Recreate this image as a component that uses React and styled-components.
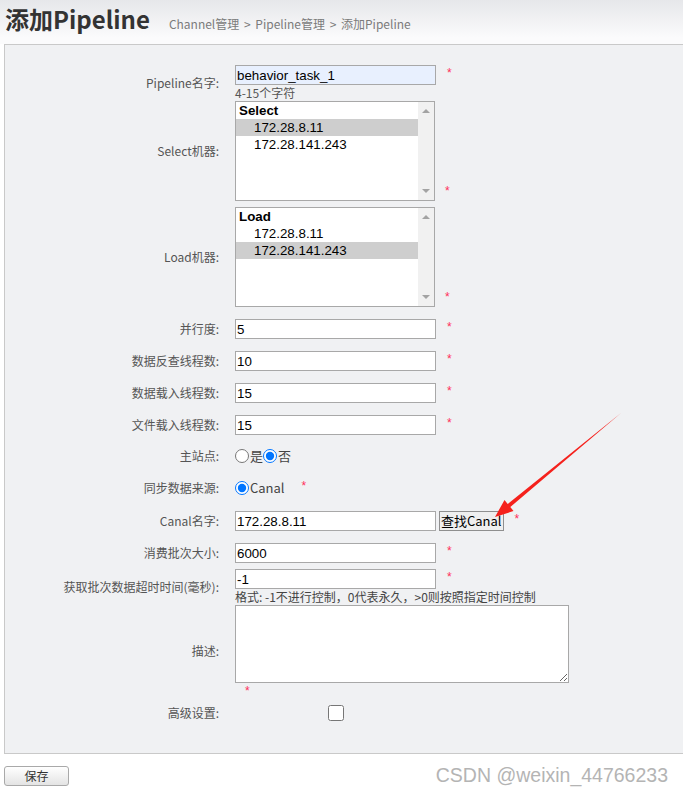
import React from 'react';
import styled, { createGlobalStyle } from 'styled-components';

const GlobalStyle = createGlobalStyle`
  body {
    margin: 0;
    background: #fff;
    font-family: "Liberation Sans", "Noto Sans CJK SC", sans-serif;
    overflow: hidden;
  }
`;

const Page = styled.div`
  position: relative;
  width: 683px;
  height: 793px;
`;

const Header = styled.div`
  height: 44px;
  display: flex;
  align-items: baseline;
  background: linear-gradient(#e6e7ea, #fbfbfc 38px);
`;

const Title = styled.h1`
  margin: 0 0 0 5px;
  font-family: "Noto Sans CJK SC", sans-serif;
  font-size: 24px;
  font-weight: 700;
  line-height: 38px;
  color: #333;
`;

const Crumbs = styled.div`
  margin-left: 19px;
  font-family: "Noto Sans CJK SC", sans-serif;
  font-size: 12px;
  color: #7b7b7b;
  word-spacing: 2px;
`;

const Panel = styled.div`
  margin: 0 -4px 0 4px;
  box-sizing: border-box;
  height: 710px;
  border: 1px solid #c9c9c9;
  background: #f0f1f3;
  padding-top: 20px;
`;

const Row = styled.div`
  display: grid;
  grid-template-columns: 214px 1fr;
  column-gap: 16px;
  align-items: center;
  margin-top: ${p => p.$mt || 0}px;
`;

const Label = styled.div`
  text-align: right;
  font-family: "Noto Sans CJK SC", sans-serif;
  font-size: 12px;
  line-height: 16px;
  color: #555;
`;

const Field = styled.div`
  display: flex;
  flex-direction: column;
  align-items: flex-start;
`;

const Line = styled.div`
  display: flex;
  align-items: ${p => p.$bottom ? 'flex-end' : 'center'};
  height: ${p => p.$h || 20}px;
`;

const Input = styled.input`
  box-sizing: border-box;
  width: 201px;
  height: 20px;
  margin: 0;
  padding: 0 1px;
  border: 1px solid #a8a8a8;
  background: ${p => p.$filled ? '#e8f0fe' : '#fff'};
  font-family: "Liberation Sans", sans-serif;
  font-size: 13.33px;
  color: #000;
  outline: none;
`;

const Star = styled.span`
  margin-left: ${p => p.$ml ?? 11}px;
  align-self: ${p => p.$self || 'flex-start'};
  padding-top: 2px;
  padding-bottom: ${p => p.$pb || 0}px;
  font-size: 12px;
  line-height: 12px;
  color: #ff2f5a;
`;

const Hint = styled.div`
  font-family: "Noto Sans CJK SC", sans-serif;
  font-size: 12px;
  line-height: 15px;
  color: ${p => p.$dark ? '#444' : '#555'};
`;

const ListBox = styled.div`
  box-sizing: border-box;
  width: 200px;
  height: 100px;
  border: 1px solid #a8a8a8;
  background: #fff;
  display: flex;
`;

const Options = styled.div`
  flex: 1;
  font-family: "Liberation Sans", sans-serif;
  font-size: 13.33px;
  color: #000;
`;

const GroupLabel = styled.div`
  padding-left: 3px;
  height: 17px;
  line-height: 17px;
  font-weight: 700;
`;

const Option = styled.div`
  padding-left: 18px;
  height: 17px;
  line-height: 17px;
  background: ${p => p.$selected ? '#cecece' : 'transparent'};
`;

const ScrollBar = styled.div`
  width: 16px;
  background: #f1f1f1;
  display: flex;
  flex-direction: column;
  justify-content: space-between;
  align-items: center;
  padding: 7px 0;
`;

const Arrow = styled.span`
  width: 0;
  height: 0;
  border-left: 4px solid transparent;
  border-right: 4px solid transparent;
  ${p => p.$down ? 'border-top: 4px solid #a3a3a3;' : 'border-bottom: 4px solid #a3a3a3;'}
`;

const Choice = styled.label`
  display: flex;
  align-items: center;
  font-family: "Noto Sans CJK SC", sans-serif;
  font-size: 13px;
  line-height: 16px;
  color: #444;

  input {
    width: 14px;
    height: 14px;
    margin: 0 1px 0 0;
  }
`;

const Button = styled.button`
  box-sizing: border-box;
  height: 20px;
  margin: 0 0 0 3px;
  padding: 0 1px;
  border: 1px solid #8f8f8f;
  background: #efefef;
  font-family: "Noto Sans CJK SC", sans-serif;
  font-size: 13px;
  line-height: 16px;
  color: #000;
`;

const TextArea = styled.textarea`
  box-sizing: border-box;
  display: block;
  width: 334px;
  height: 78px;
  margin: 0;
  border: 1px solid #a8a8a8;
  background: #fff;
`;

const CheckWrap = styled.div`
  width: 201px;
  display: flex;
  justify-content: center;

  input {
    width: 16px;
    height: 16px;
    margin: 0;
  }
`;

const Footer = styled.div`
  margin-top: 10px;
  display: flex;
  justify-content: space-between;
  align-items: center;
`;

const SaveButton = styled.button`
  margin-left: 4px;
  width: 65px;
  height: 20px;
  border: 1px solid #a9a9a9;
  border-radius: 3px;
  background: linear-gradient(#ffffff, #e4e4e4);
  font-family: "Noto Sans CJK SC", sans-serif;
  font-size: 12px;
  line-height: 16px;
  color: #333;
  padding: 0;
`;

const Watermark = styled.div`
  margin-right: 15px;
  font-family: "Liberation Sans", sans-serif;
  font-size: 19.5px;
  color: #b4b4b4;
  text-shadow: 0 0 2px #fff;
`;

const Annotation = styled.svg`
  position: absolute;
  left: 0;
  top: 0;
  pointer-events: none;
`;

const Machines = ({ title, ips, selected }) => (
  <ListBox>
    <Options>
      <GroupLabel>{title}</GroupLabel>
      {ips.map(ip => (
        <Option key={ip} $selected={ip === selected}>{ip}</Option>
      ))}
    </Options>
    <ScrollBar>
      <Arrow />
      <Arrow $down />
    </ScrollBar>
  </ListBox>
);

const TextRow = ({ label, value, mt = 12, filled, hint }) => (
  <Row $mt={mt}>
    <Label>{label}</Label>
    <Field>
      <Line>
        <Input defaultValue={value} $filled={filled} />
        <Star>*</Star>
      </Line>
      {hint && <Hint $dark={hint.dark}>{hint.text}</Hint>}
    </Field>
  </Row>
);

const ips = ['172.28.8.11', '172.28.141.243'];

export default function App() {
  return (
    <Page>
      <GlobalStyle />
      <Header>
        <Title>添加Pipeline</Title>
        <Crumbs>Channel管理 &gt; Pipeline管理 &gt; 添加Pipeline</Crumbs>
      </Header>
      <Panel>
        <TextRow label="Pipeline名字:" value="behavior_task_1" mt={0} filled hint={{ text: '4-15个字符' }} />
        <Row $mt={1}>
          <Label>Select机器:</Label>
          <Line $h={100} $bottom>
            <Machines title="Select" ips={ips} selected="172.28.8.11" />
            <Star $self="flex-end" $ml={10} $pb={4}>*</Star>
          </Line>
        </Row>
        <Row $mt={6}>
          <Label>Load机器:</Label>
          <Line $h={100} $bottom>
            <Machines title="Load" ips={ips} selected="172.28.141.243" />
            <Star $self="flex-end" $ml={10} $pb={4}>*</Star>
          </Line>
        </Row>
        <TextRow label="并行度:" value="5" />
        <TextRow label="数据反查线程数:" value="10" />
        <TextRow label="数据载入线程数:" value="15" />
        <TextRow label="文件载入线程数:" value="15" />
        <Row $mt={11}>
          <Label>主站点:</Label>
          <Line>
            <Choice><input type="radio" name="master" />是</Choice>
            <Choice><input type="radio" name="master" defaultChecked />否</Choice>
          </Line>
        </Row>
        <Row $mt={12}>
          <Label>同步数据来源:</Label>
          <Line>
            <Choice><input type="radio" name="source" defaultChecked />Canal</Choice>
            <Star $ml={17}>*</Star>
          </Line>
        </Row>
        <Row $mt={13}>
          <Label>Canal名字:</Label>
          <Line>
            <Input defaultValue="172.28.8.11" />
            <Button>查找Canal</Button>
            <Star $ml={11}>*</Star>
          </Line>
        </Row>
        <TextRow label="消费批次大小:" value="6000" />
        <TextRow
          label="获取批次数据超时时间(毫秒):"
          value="-1"
          mt={6}
          hint={{ text: '格式: -1不进行控制，0代表永久，>0则按照指定时间控制', dark: true }}
        />
        <Row $mt={1}>
          <Label>描述:</Label>
          <Field>
            <TextArea />
            <Star $ml={10} $self="flex-start">*</Star>
          </Field>
        </Row>
        <Row $mt={8}>
          <Label>高级设置:</Label>
          <CheckWrap>
            <input type="checkbox" />
          </CheckWrap>
        </Row>
      </Panel>
      <Footer>
        <SaveButton>保存</SaveButton>
        <Watermark>CSDN @weixin_44766233</Watermark>
      </Footer>
      <Annotation width="683" height="793" viewBox="0 0 683 793">
        <polygon
          points="621,413 510.3,507 513.5,511 495,517 504.5,500 507.7,504"
          fill="#f5211c"
        />
      </Annotation>
    </Page>
  );
}
